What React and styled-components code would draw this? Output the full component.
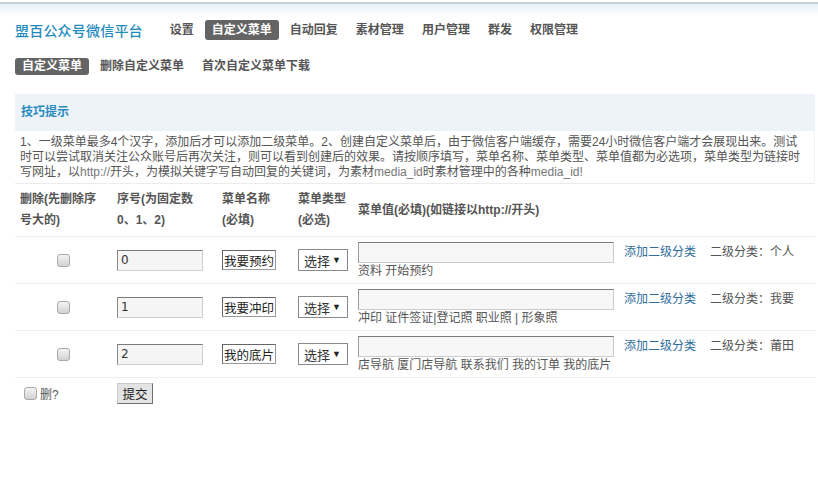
import React from "react";
import styled, { createGlobalStyle } from "styled-components";

const Global = createGlobalStyle`
  html, body { margin: 0; padding: 0; background: #fff; }
  body {
    font-family: "Liberation Sans", "Noto Sans CJK SC", sans-serif;
    font-size: 12px;
    color: #555;
  }
`;

const Page = styled.div`
  width: 818px;
`;

const TopStrip = styled.div`
  margin-top: 2px;
  height: 12px;
  border-top: 2px solid #c6cfd5;
  background: linear-gradient(#e6f0f8, #ffffff);
`;

const Header = styled.div`
  display: flex;
  align-items: center;
  height: 20px;
  margin-top: 4px;
  padding-left: 15px;
`;

const Logo = styled.div`
  font-size: 14px;
  letter-spacing: 0.2px;
  font-weight: 500;
  color: #1f8bbd;
  margin-right: 20px;
`;

const Nav = styled.div`
  display: flex;
  align-items: center;
  gap: ${(p) => p.$gap}px;
`;

const NavItem = styled.div`
  padding: 0 7px;
  height: ${(p) => p.$h}px;
  line-height: ${(p) => p.$h}px;
  border-radius: 3px;
  font-size: 12px;
  font-weight: bold;
  color: ${(p) => (p.$active ? "#fff" : "#555")};
  background: ${(p) => (p.$active ? "#646464" : "transparent")};
`;

const SubNavRow = styled.div`
  display: flex;
  margin-top: 18px;
  padding-left: 15px;
`;

const Tips = styled.div`
  margin: 19px 0 0 15px;
  width: 800px;
`;

const TipsTitle = styled.div`
  height: 37px;
  line-height: 37px;
  padding-left: 6px;
  background: #eef3fa;
  color: #2a8cbf;
  font-weight: bold;
  font-size: 12px;
`;

const TipsBody = styled.div`
  padding: 4px 11px 3px 5px;
  line-height: 15px;
  border-bottom: 1px solid #ececec;
  border-right: 1px solid #f4f4f4;
  color: #555;
`;

const Latin = styled.span`
  color: #777;
`;

const Table = styled.table`
  margin-left: 15px;
  width: 800px;
  border-collapse: collapse;
  table-layout: fixed;
`;

const Th = styled.th`
  padding: 5px;
  height: 40px;
  line-height: 21px;
  font-size: 12px;
  font-weight: bold;
  color: #555;
  text-align: left;
  vertical-align: middle;
  border-bottom: 1px solid #eee;
`;

const Td = styled.td`
  padding: 5px;
  vertical-align: middle;
  text-align: ${(p) => (p.$center ? "center" : "left")};
  border-bottom: ${(p) => (p.$last ? "none" : "1px solid #eee")};
`;

const ValueTd = styled.td`
  padding: 5px 12px 4px 5px;
  vertical-align: middle;
  line-height: 16px;
  border-bottom: 1px solid #eee;
  color: #555;
`;

const Check = styled.input.attrs({ type: "checkbox" })`
  appearance: none;
  -webkit-appearance: none;
  width: 13px;
  height: 13px;
  margin: 0 ${(p) => (p.$inline ? "3px 0 4px" : "0")};
  vertical-align: middle;
  border: 1px solid #a9a9a9;
  border-radius: 3px;
  background: linear-gradient(#f4f4f4, #d2d2d2);
`;

const SeqInput = styled.input`
  box-sizing: border-box;
  width: 86px;
  height: 21px;
  padding: 0 3px;
  font-family: "DejaVu Sans", sans-serif;
  font-size: 12px;
  color: #333;
  background: #f5f5f5;
  border: 1px solid;
  border-color: #7a7a7a #cfcfcf #cfcfcf #8a8a8a;
  outline: none;
  vertical-align: middle;
`;

const NameInput = styled.input`
  box-sizing: border-box;
  width: 54px;
  height: 20px;
  padding: 0 1px;
  font-family: "Noto Sans CJK SC", sans-serif;
  font-size: 12.5px;
  color: #222;
  background: #fff;
  border: 1px solid;
  border-color: #666 #999 #999 #666;
  outline: none;
  vertical-align: middle;
`;

const FakeSelect = styled.div`
  box-sizing: border-box;
  display: flex;
  align-items: center;
  justify-content: space-between;
  width: 50px;
  height: 22px;
  padding: 0 6px 0 5px;
  border: 1px solid #8a8a8a;
  background: #fff;
  font-size: 13px;
  color: #333;
`;

const Arrow = styled.span`
  font-size: 9px;
  color: #222;
`;

const ValueInput = styled.input`
  box-sizing: border-box;
  width: 256px;
  height: 21px;
  background: #f7f7f7;
  border: 1px solid;
  border-color: #7c7c7c #cccccc #cccccc #9a9a9a;
  outline: none;
  vertical-align: middle;
  margin: 0;
`;

const AddLink = styled.a`
  margin-left: 10px;
  color: #2f6d9c;
  text-decoration: none;
  cursor: pointer;
`;

const SubText = styled.span`
  margin-left: 14px;
`;

const DelLabel = styled.span`
  font-size: 12px;
  color: #555;
  vertical-align: middle;
`;

const Submit = styled.button`
  box-sizing: border-box;
  width: 36px;
  height: 21px;
  padding: 0;
  font-family: "Noto Sans CJK SC", sans-serif;
  font-size: 12.5px;
  color: #222;
  background: #e4e4e4;
  border: 1px solid;
  border-color: #c8c8c8 #707070 #707070 #c8c8c8;
`;

const navItems = ["设置", "自定义菜单", "自动回复", "素材管理", "用户管理", "群发", "权限管理"];
const subItems = ["自定义菜单", "删除自定义菜单", "首次自定义菜单下载"];

const rows = [
  { seq: "0", name: "我要预约", sub: "个人资料 开始预约" },
  { seq: "1", name: "我要冲印", sub: "我要冲印 证件签证|登记照 职业照 | 形象照" },
  { seq: "2", name: "我的底片", sub: "莆田店导航 厦门店导航 联系我们 我的订单 我的底片" },
];

export default function App() {
  return (
    <Page>
      <Global />
      <TopStrip />
      <Header>
        <Logo>盟百公众号微信平台</Logo>
        <Nav $gap={4}>
          {navItems.map((t, i) => (
            <NavItem key={t} $h={20} $active={i === 1}>
              {t}
            </NavItem>
          ))}
        </Nav>
      </Header>
      <SubNavRow>
        <Nav $gap={4}>
          {subItems.map((t, i) => (
            <NavItem key={t} $h={17} $active={i === 0}>
              {t}
            </NavItem>
          ))}
        </Nav>
      </SubNavRow>
      <Tips>
        <TipsTitle>技巧提示</TipsTitle>
        <TipsBody>
          1、一级菜单最多4个汉字，添加后才可以添加二级菜单。2、创建自定义菜单后，由于微信客户端缓存，需要24小时微信客户端才会展现出来。测试时可以尝试取消关注公众账号后再次关注，则可以看到创建后的效果。请按顺序填写，菜单名称、菜单类型、菜单值都为必选项，菜单类型为链接时写网址，以
          <Latin>http://</Latin>开头，为模拟关键字写自动回复的关键词，为素材
          <Latin>media_id</Latin>时素材管理中的各种<Latin>media_id!</Latin>
        </TipsBody>
      </Tips>
      <Table>
        <colgroup>
          <col style={{ width: 97 }} />
          <col style={{ width: 105 }} />
          <col style={{ width: 76 }} />
          <col style={{ width: 60 }} />
          <col />
        </colgroup>
        <thead>
          <tr>
            <Th>
              删除(先删除序
              <br />
              号大的)
            </Th>
            <Th>
              序号(为固定数
              <br />
              0、1、2)
            </Th>
            <Th>
              菜单名称
              <br />
              (必填)
            </Th>
            <Th>
              菜单类型
              <br />
              (必选)
            </Th>
            <Th>菜单值(必填)(如链接以http://开头)</Th>
          </tr>
        </thead>
        <tbody>
          {rows.map((r) => (
            <tr key={r.seq}>
              <Td $center>
                <Check />
              </Td>
              <Td>
                <SeqInput defaultValue={r.seq} />
              </Td>
              <Td>
                <NameInput defaultValue={r.name} />
              </Td>
              <Td>
                <FakeSelect>
                  选择<Arrow>▼</Arrow>
                </FakeSelect>
              </Td>
              <ValueTd>
                <ValueInput />
                <AddLink>添加二级分类</AddLink>
                <SubText>二级分类：{r.sub}</SubText>
              </ValueTd>
            </tr>
          ))}
          <tr>
            <Td $last>
              <Check $inline />
              <DelLabel>删?</DelLabel>
            </Td>
            <Td $last>
              <Submit>提交</Submit>
            </Td>
            <Td $last />
            <Td $last />
            <Td $last />
          </tr>
        </tbody>
      </Table>
    </Page>
  );
}
